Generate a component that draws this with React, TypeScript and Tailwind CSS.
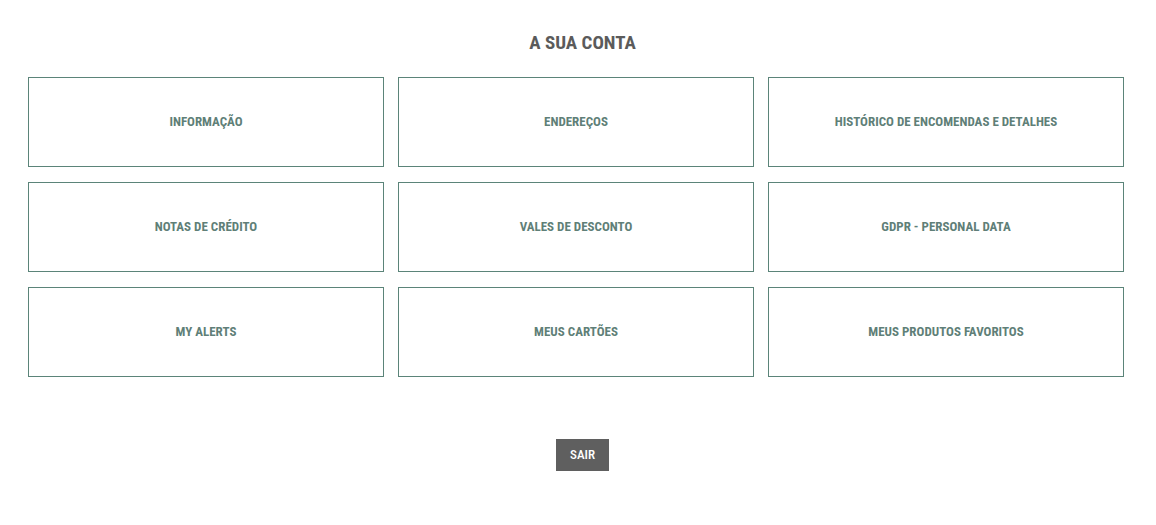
const items = [
  "Informação",
  "Endereços",
  "Histórico de encomendas e detalhes",
  "Notas de crédito",
  "Vales de desconto",
  "GDPR - Personal data",
  "My alerts",
  "Meus cartões",
  "Meus produtos favoritos",
];

export default function App() {
  return (
    <div className="min-h-[525px] bg-white pl-[28px] pr-[32px] pt-[32px] font-['Roboto_Condensed','Roboto',sans-serif]">
      <h1 className="pl-[13px] text-center text-[19px] font-bold uppercase leading-[22px] text-[#5b5b5b]">
        A sua conta
      </h1>
      <div className="mt-[23px] grid grid-cols-3 gap-x-[14px] gap-y-[15px]">
        {items.map((label) => (
          <a
            key={label}
            href="#"
            className="flex h-[90px] items-center justify-center border border-[#5b8479] text-[13px] font-bold uppercase text-[#5f7f78]"
          >
            {label}
          </a>
        ))}
      </div>
      <div className="mt-[62px] flex justify-center pl-[13px]">
        <button className="h-[32px] w-[53px] bg-[#5f5f5f] text-[13px] font-medium uppercase text-white">
          Sair
        </button>
      </div>
    </div>
  );
}
